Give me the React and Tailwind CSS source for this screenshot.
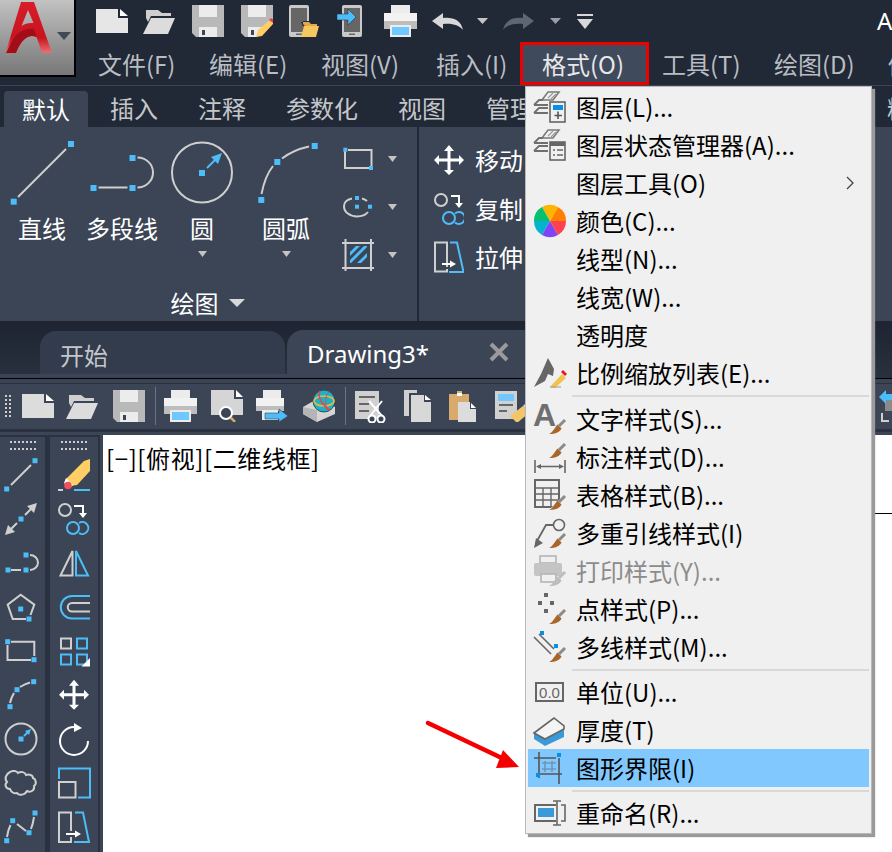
import React from "react";

const GRAY = "#cfcfcf";
const BLUE = "#4dbdf9";
const CJK = "font-['Noto_Sans_CJK_SC','Noto_Sans',sans-serif]";

// page-coordinate svg: the viewBox is the region of the screen it covers
function Pic({ box, className = "", children }) {
  const [x, y, w, h] = box;
  return (
    <svg width={w} height={h} viewBox={`${x} ${y} ${w} ${h}`} className={`shrink-0 block ${className}`} fill="none">
      {children}
    </svg>
  );
}

function Sq({ x, y, s = 6, c = BLUE }) {
  return <rect x={x - s / 2} y={y - s / 2} width={s} height={s} fill={c} />;
}

function Caret({ w = 9, h = 6, c = "#c4c4c4", className = "" }) {
  return (
    <svg width={w} height={h} viewBox={`0 0 ${w} ${h}`} className={`shrink-0 block ${className}`}>
      <polygon points={`0,0 ${w},0 ${w / 2},${h}`} fill={c} />
    </svg>
  );
}

function NewFile({ fill = "#e6e6e6" }) {
  return (
    <svg width="32" height="24" viewBox="0 0 32 24" className="block shrink-0">
      <path d="M0 0H22V9H32V24H0Z" fill={fill} />
      <path d="M24 0L32 7H24Z" fill="#fff" />
    </svg>
  );
}

function OpenFile() {
  return (
    <svg width="32" height="25" viewBox="0 0 32 25" className="block shrink-0">
      <path d="M3 9V1H15L19 4H28V7H8L5 13Z" fill="#cfcfcf" />
      <path d="M8 9H32L25 25H0Z" fill="#dcdcdc" />
    </svg>
  );
}

function Floppy({ pen = false }) {
  return (
    <svg width="32" height="32" viewBox="0 0 32 32" className="block shrink-0">
      <path d="M0 0H32V32H4L0 28Z" fill="#b9b9b9" />
      <rect x="7" y="0" width="18" height="12" fill="#ececec" />
      <rect x="7" y="22" width="18" height="10" fill="#ececec" />
      <rect x="10" y="25" width="3" height="5" fill="#3b4556" />
      {pen && (
        <g>
          <path d="M16 32L32 14V32Z" fill="#212836" />
          <path d="M15 32L17 25L29 15L33 18L21 31Z" fill="#ffcf66" />
          <path d="M28 15L30 13L33 15L32 18Z" fill="#f04050" />
        </g>
      )}
    </svg>
  );
}

function Printer({ paper = true }) {
  return (
    <svg width="33" height="32" viewBox="0 0 33 32" className="block shrink-0">
      <rect x="7" y="0" width="19" height="8" fill="#ececec" />
      <rect x="0" y="8" width="33" height="8" fill="#f2f2f2" />
      <rect x="0" y="16" width="33" height="8" fill="#bdbdbd" />
      <rect x="6" y="20" width="21" height="12" fill="#ececec" />
      {paper && <rect x="8" y="22" width="17" height="8" fill="#6fc8ff" />}
    </svg>
  );
}

function PhoneOpen() {
  return (
    <svg width="30" height="32" viewBox="0 0 30 32" className="block shrink-0">
      <rect x="0" y="0" width="20" height="32" rx="2" fill="#c9c9c9" />
      <rect x="2" y="3" width="16" height="24" fill="#666" />
      <rect x="7" y="28.5" width="6" height="1.5" fill="#666" />
      <path d="M12 17H14V16H20L22 18H28V21H14Z" fill="#212836" />
      <path d="M14 19V17H20L22 19H28V21H16Z" fill="#e0a94f" />
      <path d="M15 21H30L27 32H12Z" fill="#f6c760" />
    </svg>
  );
}

function PhoneSend() {
  return (
    <svg width="25" height="32" viewBox="0 0 25 32" className="block shrink-0">
      <rect x="5" y="0" width="20" height="32" rx="2" fill="#c9c9c9" />
      <rect x="7" y="3" width="16" height="24" fill="#666" />
      <rect x="12" y="28.5" width="6" height="1.5" fill="#666" />
      <path d="M0 9H11V4L19 12L11 20V15H0Z" fill="#4dbdf9" stroke="#212836" strokeWidth="0.5" />
    </svg>
  );
}

function UndoArrow({ c, flip = false }) {
  return (
    <svg width="31" height="17" viewBox="0 0 31 17" className={`block shrink-0 ${flip ? "-scale-x-100" : ""}`}>
      <path d="M0 8L11 0V5C21 4 29 7 31 17C27 12 20 10 11 11V16Z" fill={c} />
    </svg>
  );
}

function CustomizeCaret() {
  return (
    <svg width="16" height="15" viewBox="0 0 16 15" className="block shrink-0">
      <rect x="0" y="0" width="16" height="2" fill="#d8d8d8" />
      <polygon points="0,5 16,5 8,15" fill="#d8d8d8" />
    </svg>
  );
}

function AutocadLogo() {
  return (
    <svg width="58" height="56" viewBox="0 0 58 56" className="block">
      <defs>
        <linearGradient id="logoRed" x1="0" y1="0" x2="0" y2="1">
          <stop offset="0" stopColor="#d81c2a" />
          <stop offset="0.7" stopColor="#c8141f" />
          <stop offset="1" stopColor="#ee7072" />
        </linearGradient>
      </defs>
      <path
        d="M21 2H34L52 53H42L36.5 37C29 34 22 38 16 53H5.5ZM28 10L21.5 26C25 23.5 29 22.5 33.5 23Z"
        fill="url(#logoRed)"
        fillRule="evenodd"
      />
      <path d="M9 47C14 34 24 27 34 29L36.5 37C29 34 22 38 16 53H6Z" fill="#a30d18" />
    </svg>
  );
}

function MenuBar() {
  const items = [
    ["文件(F)", "w-[111px]"],
    ["编辑(E)", "w-[112px]"],
    ["视图(V)", "w-[115px]"],
    ["插入(I)", "w-[84px]"],
  ];
  return (
    <div className="flex h-[43px] items-center pl-[22px] text-[24px] text-[#b9bdc2] whitespace-nowrap">
      {items.map(([t, w]) => (
        <span key={t} className={`${w} shrink-0`}>{t}</span>
      ))}
      <span className="w-[129px] h-[43px] shrink-0 border-[3px] border-[#ee0000] bg-[#3f4a5c] text-[#e8e8e8] flex items-center pl-[19px]">
        格式(O)
      </span>
      <span className="w-[112px] shrink-0 pl-[13px]">工具(T)</span>
      <span className="w-[114px] shrink-0 pl-[13px]">绘图(D)</span>
      <span className="shrink-0 pl-[13px]">修改(M)</span>
    </div>
  );
}

function QuickBar() {
  return (
    <div className="flex h-[42px] items-center pl-[20px]">
      <div className="w-[47px] shrink-0"><NewFile /></div>
      <div className="w-[49px] shrink-0"><OpenFile /></div>
      <div className="w-[49px] shrink-0"><Floppy /></div>
      <div className="w-[48px] shrink-0"><Floppy pen /></div>
      <div className="w-[48px] shrink-0"><PhoneOpen /></div>
      <div className="w-[47px] shrink-0"><PhoneSend /></div>
      <div className="w-[48px] shrink-0"><Printer /></div>
      <div className="w-[45px] shrink-0"><UndoArrow c="#d8d8d8" /></div>
      <div className="w-[26px] shrink-0"><Caret w={11} h={6} /></div>
      <div className="w-[47px] shrink-0"><UndoArrow c="#5d6673" flip /></div>
      <div className="w-[27px] shrink-0"><Caret w={11} h={6} c="#9a9fa6" /></div>
      <CustomizeCaret />
      <span className="ml-[284px] shrink-0 text-[24px] text-white leading-none font-['Noto_Sans',sans-serif]">A</span>
    </div>
  );
}

function Header() {
  return (
    <div className="flex h-[85px]">
      <div className="w-[76px] h-[77px] shrink-0 border-r-2 border-b-2 border-[#000] bg-gradient-to-b from-[#c2c2c2] to-[#787878] relative">
        <AutocadLogo />
        <Caret w={14} h={8} c="#3f4a55" className="absolute left-[57px] top-[32px]" />
      </div>
      <div className="flex-1 min-w-0 overflow-hidden">
        <QuickBar />
        <MenuBar />
      </div>
    </div>
  );
}

function RibbonTabs() {
  const tabs = [
    ["插入", "ml-[22px]"],
    ["注释", "ml-[40px]"],
    ["参数化", "ml-[40px]"],
    ["视图", "ml-[40px]"],
    ["管理", "ml-[40px]"],
  ];
  return (
    <div className="h-[42px] flex text-[24px] text-[#c4c6c9] whitespace-nowrap border-t border-[#3b4556] pl-[4px] overflow-hidden">
      <div className="w-[84px] h-[36px] mt-[5px] shrink-0 bg-[#3b4556] rounded-t-[4px] text-white flex items-center justify-center">
        默认
      </div>
      {tabs.map(([t, m]) => (
        <span key={t} className={`${m} shrink-0 mt-[4px] h-[36px] leading-[36px]`}>{t}</span>
      ))}
      <span className="ml-[353px] shrink-0 mt-[4px] h-[36px] leading-[36px]">精</span>
    </div>
  );
}

function BigTool({ width, label, caret, children }) {
  return (
    <div className={`${width} flex flex-col items-center shrink-0`}>
      <div className="h-[83px]">{children}</div>
      <span className="text-[24px] leading-[36px] text-white">{label}</span>
      {caret && <Caret w={9} h={6} className="mt-[5px]" />}
    </div>
  );
}

function DrawPanel() {
  return (
    <div className="w-[419px] shrink-0 border-r-2 border-[#212836] flex flex-col">
      <div className="flex h-[160px]">
        <BigTool width="w-[84px]" label="直线">
          <Pic box={[-1, 128, 84, 83]}>
            <line x1="65" y1="150" x2="17" y2="198" stroke={GRAY} strokeWidth="2" />
            <Sq x={70} y={145} />
            <Sq x={12.7} y={202.7} />
          </Pic>
        </BigTool>
        <BigTool width="w-[76px]" label="多段线">
          <Pic box={[82.5, 128, 76, 83]}>
            <line x1="97" y1="188.5" x2="126" y2="188.5" stroke={GRAY} strokeWidth="2" />
            <path d="M136 158.5A15.5 15 0 0 1 136 188.5" stroke={GRAY} strokeWidth="2" />
            <Sq x={92} y={189} />
            <Sq x={131} y={189} />
            <Sq x={131} y={159} />
          </Pic>
        </BigTool>
        <BigTool width="w-[84px]" label="圆" caret>
          <Pic box={[157, 128, 84, 83]}>
            <circle cx="199" cy="173.5" r="30" stroke={GRAY} strokeWidth="2" />
            <line x1="204" y1="169" x2="215" y2="158" stroke={BLUE} strokeWidth="2" />
            <polygon points="219,154 215,165 208,158" fill={BLUE} />
            <Sq x={199} y={174} />
          </Pic>
        </BigTool>
        <BigTool width="w-[84px]" label="圆弧" caret>
          <Pic box={[240, 128, 84, 83]}>
            <path d="M257.5 195Q261 177 269 167" stroke={GRAY} strokeWidth="2" />
            <path d="M278 159.5Q289 151 305 147.5" stroke={GRAY} strokeWidth="2" />
            <Sq x={257.3} y={201} />
            <Sq x={273.3} y={163} />
            <Sq x={310.7} y={147} />
          </Pic>
        </BigTool>
        <div className="flex flex-col pt-[8px] pl-[12px]">
          <div className="flex items-center h-[48px]">
            <Pic box={[335, 144, 36, 32]}>
              <path d="M340 151V169H366.5V151H343" stroke={GRAY} strokeWidth="2" />
              <Sq x={340.3} y={150.7} s={4} />
              <Sq x={366} y={169} s={4} />
            </Pic>
            <Caret className="ml-[12px]" />
          </div>
          <div className="flex items-center h-[48px]">
            <Pic box={[335, 192, 36, 32]}>
              <path d="M347 199.5C340 201 339 204 339 207.5C339 213 345 217.5 352 217.5C357 217.5 361 215.5 363 213" stroke={GRAY} strokeWidth="2" />
              <path d="M357 199.5C359 200 361 201 362 202" stroke={GRAY} strokeWidth="2" />
              <Sq x={352} y={199} s={4} />
              <Sq x={352} y={207.7} s={4} />
              <Sq x={365} y={207.7} s={4} />
            </Pic>
            <Caret className="ml-[12px]" />
          </div>
          <div className="flex items-center h-[48px]">
            <Pic box={[335, 240, 36, 32]}>
              <path d="M337 244H369M337 269H369M340.5 240V272M366 240V272" stroke={GRAY} strokeWidth="2" />
              <rect x="345" y="247" width="17" height="17" fill="#3b4556" />
              <path d="M345 253L351 247H355L345 257ZM345 261L359 247H362V248L346 264H345ZM352 264L362 254V258L356 264Z" fill={BLUE} />
            </Pic>
            <Caret className="ml-[12px]" />
          </div>
        </div>
      </div>
      <div className="flex-1 flex items-center justify-center text-white text-[24px] pr-[2px] pt-[2px]">
        <span>绘图</span>
        <Caret w={16} h={8} c="#d8d8d8" className="ml-[10px]" />
      </div>
    </div>
  );
}

function MoveIcon({ c = "#fff" }) {
  return (
    <svg width="30" height="30" viewBox="0 0 30 30" className="block shrink-0">
      <path d="M13.5 5H16.5V13.5H25V10L30 15L25 20V16.5H16.5V25H20L15 30L10 25H13.5V16.5H5V20L0 15L5 10V13.5H13.5V5Z" fill={c} />
      <polygon points="15,0 20,6 10,6" fill={c} />
    </svg>
  );
}

function ModifyPanel() {
  const rows = [
    ["移动", <MoveIcon key="m" />],
    ["复制",
      <Pic key="c" box={[428, 192, 30, 32]}>
        <circle cx="435" cy="199" r="6" stroke={GRAY} strokeWidth="2" />
        <path d="M445 195H453V203" stroke="#fff" strokeWidth="2" />
        <polygon points="449,202 457,202 453,207" fill="#fff" />
        <circle cx="443" cy="217" r="6" stroke={BLUE} strokeWidth="2" />
        <path d="M449 212.5A6 6 0 1 1 449 221.5" stroke={BLUE} strokeWidth="2" />
      </Pic>],
    ["拉伸",
      <Pic key="l" box={[428, 240, 30, 32]}>
        <path d="M441 266V241.5H429V270.5H441V268" stroke={GRAY} strokeWidth="2" />
        <path d="M444 241.5H451L457.5 271H443" stroke={BLUE} strokeWidth="2" />
        <path d="M436 263H445" stroke="#fff" strokeWidth="2" />
        <polygon points="444,259.5 450,263 444,266.5" fill="#fff" />
      </Pic>],
  ];
  return (
    <div className="flex flex-col pt-[9px] pl-[15px]">
      {rows.map(([t, icon]) => (
        <div key={t} className="flex items-center h-[48.5px] gap-[11px] text-white text-[24px] whitespace-nowrap">
          {icon}
          <span>{t}</span>
        </div>
      ))}
    </div>
  );
}

function FileTabs() {
  return (
    <div className="h-[57px] flex flex-col bg-gradient-to-b from-[#1e2431] to-[#29313f]">
      <div className="h-[53px] flex items-end pl-[40px]">
        <div className="w-[245px] h-[43px] bg-[#323c4c] rounded-t-[16px] text-[24px] text-[#c4c6c9] flex items-center pl-[20px] pt-[5px]">
          开始
        </div>
        <div className="w-[252px] ml-[2px] h-[44px] bg-[#3b4556] rounded-t-[16px] flex items-center pl-[20px] pt-[4px] text-white text-[24px] font-['Noto_Sans',sans-serif]">
          Drawing3*
          <svg width="20" height="20" viewBox="0 0 20 20" className="ml-[60px] -mt-[4px] shrink-0 block">
            <path d="M2 2L18 18M18 2L2 18" stroke="#9a9a9a" strokeWidth="4" />
          </svg>
        </div>
      </div>
      <div className="h-[4px] w-[539px] bg-[#3b4556]" />
    </div>
  );
}

function Grip() {
  return (
    <div className="grid grid-cols-2 gap-[2px] w-[6px]">
      {Array.from({ length: 12 }).map((_, i) => (
        <span key={i} className="w-[2px] h-[2px] bg-[#cfcfcf]" />
      ))}
    </div>
  );
}

function StdToolbar() {
  return (
    <div className="h-[50px] bg-[#3b4556] flex flex-col">
      <div className="h-[4px] bg-[#3a4454]" />
      <div className="h-px bg-[#2a3241]" />
      <div className="flex-1 flex items-center pl-[5px] pb-[1px] overflow-hidden">
        <div className="w-[17px] shrink-0"><Grip /></div>
        <div className="w-[44px] shrink-0"><NewFile fill="#dcdcdc" /></div>
        <div className="w-[47px] shrink-0"><OpenFile /></div>
        <div className="w-[42px] shrink-0"><Floppy /></div>
        <span className="w-px h-[38px] shrink-0 bg-[#6b7482] mr-[8px]" />
        <div className="w-[47px] shrink-0"><Printer /></div>
        <div className="w-[45px] shrink-0">
          <svg width="32" height="32" viewBox="0 0 32 32" className="block">
            <path d="M0 0H23V9H32V25H0Z" fill="#d5d5d5" />
            <path d="M25 0L32 7H25Z" fill="#fff" />
            <circle cx="15" cy="23" r="6" fill="#3b4556" stroke="#fff" strokeWidth="2" />
            <path d="M19.5 27.5L24 32" stroke="#d9a86a" strokeWidth="2.5" />
          </svg>
        </div>
        <div className="w-[47px] shrink-0">
          <svg width="32" height="32" viewBox="0 0 32 32" className="block">
            <rect x="7" y="0" width="18" height="8" fill="#ececec" />
            <rect x="0" y="8" width="28" height="8" fill="#f2f2f2" />
            <rect x="0" y="16" width="28" height="5" fill="#bdbdbd" />
            <rect x="6" y="20" width="16" height="10" fill="#ececec" />
            <path d="M9 23H23V19L32 26L23 32V29H9Z" fill="#4dbdf9" stroke="#3b4556" strokeWidth="0.6" />
          </svg>
        </div>
        <div className="w-[42px] shrink-0">
          <svg width="32" height="32" viewBox="0 0 32 32" fill="none" className="block">
            <path d="M0 17L14 9L32 17V24L14 32L0 24Z" fill="#d5d5d5" />
            <path d="M14 32V20L0 17V24Z" fill="#b5b5b5" />
            <circle cx="21" cy="11" r="11" fill="#1cb3c6" stroke="#3b4556" />
            <ellipse cx="21" cy="11" rx="10" ry="5" stroke="#f6b73c" strokeWidth="1.5" />
            <path d="M17 1C14 8 20 16 27 20" stroke="#f04050" strokeWidth="1.5" />
            <path d="M26 2C22 6 22 12 24 20" stroke="#f04050" strokeWidth="1" />
          </svg>
        </div>
        <span className="w-px h-[38px] shrink-0 bg-[#6b7482] mr-[9px]" />
        <div className="w-[49px] shrink-0">
          <svg width="33" height="33" viewBox="0 0 33 33" fill="none" className="block">
            <rect x="0" y="1" width="24" height="28" fill="#d0d0d0" />
            <path d="M4 7H20M4 14H14M4 21H14" stroke="#666" strokeWidth="2" />
            <path d="M14 11L27 26M27 11L15 26" stroke="#fff" strokeWidth="2" />
            <circle cx="17" cy="29" r="3.5" fill="#3b4556" stroke="#fff" strokeWidth="2" />
            <circle cx="26" cy="29" r="3.5" fill="#3b4556" stroke="#fff" strokeWidth="2" />
          </svg>
        </div>
        <div className="w-[45px] shrink-0">
          <svg width="27" height="32" viewBox="0 0 27 32" className="block">
            <path d="M0 0H13V3H5V26H0Z" fill="#d0d0d0" />
            <path d="M7 5H20V12H27V32H7Z" fill="#d8d8d8" />
            <path d="M21 5L27 10H21Z" fill="#fff" />
          </svg>
        </div>
        <div className="w-[46px] shrink-0">
          <svg width="27" height="32" viewBox="0 0 27 32" className="block">
            <path d="M0 4H8V1H13V4H20V12H9V30H0Z" fill="#d9aa6e" />
            <rect x="8" y="3" width="5" height="3" fill="#fff" />
            <path d="M9 12H21V19H27V32H9Z" fill="#dcdcdc" />
            <path d="M22 13L27 18H22Z" fill="#fff" />
          </svg>
        </div>
        <div className="shrink-0">
          <svg width="38" height="32" viewBox="0 0 38 32" fill="none" className="block">
            <rect x="0" y="1" width="22" height="28" fill="#d0d0d0" />
            <rect x="3" y="4" width="16" height="7" fill="#6fc8ff" />
            <path d="M4 15H18M4 21H12" stroke="#666" strokeWidth="2" />
            <path d="M15 26L28 16L34 23L22 33Z" fill="#f2c568" />
            <path d="M28 16L31 13L37 19L34 23Z" fill="#ddd" />
          </svg>
        </div>
        <div className="ml-auto shrink-0">
          <svg width="13" height="34" viewBox="0 0 13 34" fill="none" className="block">
            <rect x="6" y="6" width="7" height="16" fill="#8a8a8a" />
            <path d="M0 8L7 1V15Z" fill="#4dbdf9" />
            <rect x="6" y="5" width="7" height="6" fill="#4dbdf9" />
            <path d="M3 24V32H10" stroke="#cfcfcf" strokeWidth="2" />
          </svg>
        </div>
      </div>
    </div>
  );
}

function Cell({ box, children }) {
  return <Pic box={box}>{children}</Pic>;
}

function GripRow() {
  return (
    <div className="h-[16px] pt-[4px] flex justify-center">
      <div className="grid grid-cols-7 gap-x-[2px] gap-y-[2px]">
        {Array.from({ length: 14 }).map((_, i) => (
          <span key={i} className="w-[2px] h-[2px] bg-[#cfcfcf]" />
        ))}
      </div>
    </div>
  );
}

function DrawColumn() {
  const s = { stroke: GRAY, strokeWidth: 2 };
  return (
    <div className="w-[45px] flex flex-col border-t-2 border-[#2a3241]">
      <GripRow />
      <Cell box={[0, 454, 45, 44]}>
        <line x1="11" y1="486" x2="31" y2="466" {...s} />
        <Sq x={35} y={461.7} s={5} />
        <Sq x={6.7} y={490} s={5} />
      </Cell>
      <Cell box={[0, 498, 45, 44]}>
        <path d="M11 530L17 524M25 516L31 510" {...s} />
        <polygon points="5,536 8,526 15,533" fill={GRAY} />
        <polygon points="37,504 34,514 27,507" fill={GRAY} />
        <Sq x={21} y={520} s={5} />
      </Cell>
      <Cell box={[0, 542, 45, 44]}>
        <path d="M11 571H21" {...s} />
        <path d="M30 556A8 7.5 0 0 1 30 571" {...s} />
        <Sq x={26} y={556} s={5} />
        <Sq x={26} y={571} s={5} />
        <Sq x={8} y={571} s={5} />
      </Cell>
      <Cell box={[0, 586, 45, 44]}>
        <path d="M26 620H12.7L7.7 605.7L20.7 595.7L34.3 605.7L30.5 616" {...s} />
        <Sq x={20.7} y={610} s={5} />
        <Sq x={29} y={620} s={5} />
      </Cell>
      <Cell box={[0, 630, 45, 44]}>
        <path d="M7.5 646V661H31M11 642.7H34.3V657" {...s} />
        <Sq x={7.7} y={642.7} s={5} />
        <Sq x={34} y={660.7} s={5} />
      </Cell>
      <Cell box={[0, 674, 45, 44]}>
        <path d="M10 704Q11 699 14 694" {...s} />
        <path d="M20 688Q25 685 30 683.5" {...s} />
        <Sq x={10} y={707.7} s={5} />
        <Sq x={17} y={690.7} s={5} />
        <Sq x={33.7} y={682.7} s={5} />
      </Cell>
      <Cell box={[0, 718, 45, 44]}>
        <circle cx="21" cy="740" r="15.5" {...s} />
        <line x1="24" y1="737" x2="29" y2="732" stroke={BLUE} strokeWidth="2" />
        <polygon points="31,730 29,736 25,732" fill={BLUE} />
        <Sq x={21} y={740} s={5} />
      </Cell>
      <Cell box={[0, 762, 45, 44]}>
        <path d="M10 773C13 771 17 772 18 774C21 772 25 773 26 776C29 775 33 776 33 779C36 780 37 785 34 787C35 791 31 794 27 792C25 796 19 797 17 794C14 795 11 793 10 790C6 790 4 786 7 783C4 780 6 775 10 773Z" {...s} />
      </Cell>
      <Cell box={[0, 806, 45, 44]}>
        <path d="M7 838Q8 831 10.5 826" {...s} />
        <path d="M17 825L26 832" {...s} />
        <path d="M31 830Q33 825 34 818" {...s} />
        <Sq x={6.7} y={841.7} s={5} />
        <Sq x={12.7} y={821.7} s={5} />
        <Sq x={29} y={833.7} s={5} />
        <Sq x={35} y={814} s={5} />
      </Cell>
    </div>
  );
}

function ModifyColumn() {
  const s = { stroke: GRAY, strokeWidth: 2 };
  const b = { stroke: BLUE, strokeWidth: 2 };
  return (
    <div className="w-[48px] flex flex-col border-t-2 border-[#2a3241]">
      <GripRow />
      <Cell box={[50, 454, 48, 44]}>
        <path d="M66 480L84 462L90 460V472L77 486L70 487Z" fill="#ffcf66" />
        <path d="M66 479L73 486L70 489L64 484Z" fill="#fff" />
        <circle cx="68" cy="486.5" r="3.8" fill="#f0505a" />
        <path d="M58 491H63" {...s} />
        <path d="M74 491H90" {...b} />
      </Cell>
      <Cell box={[50, 498, 48, 44]}>
        <circle cx="65" cy="511" r="6" {...s} />
        <path d="M74 507H83V515" stroke="#fff" strokeWidth="2" />
        <polygon points="79,514 87,514 83,519" fill="#fff" />
        <circle cx="73" cy="529" r="6" {...b} />
        <path d="M79 524A6 6 0 1 1 79 534" {...b} />
      </Cell>
      <Cell box={[50, 542, 48, 44]}>
        <path d="M72.5 552V576.5H60.5Z" {...s} />
        <path d="M76 552V576.5H88Z" {...b} />
      </Cell>
      <Cell box={[50, 586, 48, 44]}>
        <path d="M90 597H72A11.2 11.2 0 0 0 72 619.5H90" {...b} />
        <path d="M90 604H72A4.2 4.2 0 0 0 72 612.5H90" {...s} />
      </Cell>
      <Cell box={[50, 630, 48, 44]}>
        <rect x="61" y="639.5" width="10" height="10" {...s} />
        <rect x="77" y="639.5" width="10" height="10" {...b} />
        <rect x="61" y="655.5" width="10" height="10" {...b} />
        <rect x="77" y="655.5" width="10" height="10" {...b} />
        <polygon points="81.5,667.5 90,667.5 90,659" fill="#fff" />
      </Cell>
      <Cell box={[50, 674, 48, 44]}>
        <g transform="translate(59 680.7)">
          <path d="M13.5 5H16.5V13.5H25V10L30 15L25 20V16.5H16.5V25H20L15 30L10 25H13.5V16.5H5V20L0 15L5 10V13.5H13.5V5Z" fill="#fff" />
          <polygon points="15,0 20,6 10,6" fill="#fff" />
        </g>
      </Cell>
      <Cell box={[50, 718, 48, 44]}>
        <path d="M74 728A14 14 0 1 0 88 742" stroke="#fff" strokeWidth="2" />
        <polygon points="74,724 82,729 74,733" fill="#fff" />
      </Cell>
      <Cell box={[50, 762, 48, 44]}>
        <path d="M59 780V769.5H90V798.5H78" {...b} />
        <rect x="59" y="783" width="16.5" height="15.5" {...s} />
      </Cell>
      <Cell box={[50, 806, 48, 44]}>
        <path d="M71 832V813.5H59V843H71V838" {...s} />
        <path d="M75 813.5H83L89 843H74" {...b} />
        <path d="M66 835H76" stroke="#fff" strokeWidth="2" />
        <polygon points="75,831.5 81,835 75,838.5" fill="#fff" />
      </Cell>
    </div>
  );
}

// little paint brush that the style entries share
function Brush({ y = 0, handle = "#8a8a8a", tip = "#a9662a" }) {
  return (
    <g transform={`translate(0 ${y})`}>
      <path d="M31 17L25 23" stroke={handle} strokeWidth="3" />
      <path d="M23.5 21.5L27.5 25.5C26 29 22 31 15 31C19 29 20.5 25 23.5 21.5Z" fill={tip} />
    </g>
  );
}

function Layers() {
  return (
    <g>
      <path d="M8 9L14 1H25L19 9Z" stroke="#7a7a7a" strokeWidth="1.6" />
      <path d="M14 7L19 2M17 8L22 3" stroke="#9a9a9a" strokeWidth="1.2" />
      <path d="M0 14L5 9H9M0 14H14" stroke="#6f6f6f" strokeWidth="1.8" />
      <path d="M0 22L5 17H14M0 22H14" stroke="#6f6f6f" strokeWidth="1.8" />
    </g>
  );
}

const ICONS = {
  layer: (
    <>
      <Layers />
      <rect x="16" y="11" width="15" height="20" fill="#f0f0f0" stroke="#666" strokeWidth="1.6" />
      <rect x="19" y="14" width="10" height="5" fill="#0a8fe8" />
      <path d="M24 20.5V28M20.5 24.5H28" stroke="#555" strokeWidth="1.6" />
    </>
  ),
  layerState: (
    <>
      <Layers />
      <rect x="16" y="13" width="15" height="18" fill="#f0f0f0" stroke="#666" strokeWidth="1.6" />
      <rect x="16" y="13" width="15" height="4" fill="#666" />
      <path d="M19 21H21M23 21H29M19 26H21M23 26H29" stroke="#666" strokeWidth="1.6" />
    </>
  ),
  color: (
    <>
      <path d="M16 16L24 2.1A16 16 0 0 1 32 16Z" fill="#ff8000" />
      <path d="M16 16L8 2.1A16 16 0 0 1 24 2.1Z" fill="#ffb400" />
      <path d="M16 16L0 16A16 16 0 0 1 8 2.1Z" fill="#06bf6f" />
      <path d="M16 16L8 29.9A16 16 0 0 1 0 16Z" fill="#05b3cf" />
      <path d="M16 16L24 29.9A16 16 0 0 1 8 29.9Z" fill="#7f45f5" />
      <path d="M16 16L32 16A16 16 0 0 1 24 29.9Z" fill="#ff4050" />
    </>
  ),
  scale: (
    <>
      <path d="M14 1L20 12L19 19L14 17L11 24L0 30L7 17Z" fill="#666" />
      <path d="M16 30L28 17L32 21L21 31Z" fill="#f2c14e" />
      <path d="M27 15L29 13L33 17L31 19Z" fill="#e8132a" />
      <path d="M16 30L27 30" stroke="#999" strokeWidth="1" />
    </>
  ),
  text: (
    <>
      <text x="-1" y="23" fontSize="32" fontWeight="700" fill="#6f6f6f" fontFamily="Liberation Sans, sans-serif">A</text>
      <Brush />
    </>
  ),
  dim: (
    <>
      <path d="M1 19V32M31 19V32M4 25.5H28" stroke="#666" strokeWidth="1.6" />
      <polygon points="2,25.5 7,23 7,28" fill="#666" />
      <polygon points="30,25.5 25,23 25,28" fill="#666" />
      <Brush y={-14} />
    </>
  ),
  table: (
    <>
      <rect x="1" y="1" width="24" height="27" stroke="#666" strokeWidth="2" />
      <path d="M1 9H25M1 15H25M1 21H25M9 9V28M17 9V28" stroke="#666" strokeWidth="1.4" />
      <path d="M14 32L32 14V32Z" fill="#f0f0f0" />
      <Brush />
    </>
  ),
  leader: (
    <>
      <circle cx="25" cy="8" r="5.5" stroke="#666" strokeWidth="1.6" />
      <path d="M20 8H12L3 24" stroke="#666" strokeWidth="1.8" />
      <polygon points="0,31 2,21 9,26" fill="#666" />
      <Brush />
    </>
  ),
  plot: (
    <>
      <rect x="6" y="1" width="16" height="7" stroke="#b5b5b5" strokeWidth="1.6" />
      <rect x="0" y="8" width="28" height="13" rx="2" fill="#c4c4c4" />
      <rect x="7" y="19" width="15" height="8" fill="#f0f0f0" stroke="#b5b5b5" strokeWidth="1.6" />
      <Brush handle="#bdbdbd" tip="#bdbdbd" />
    </>
  ),
  point: (
    <>
      <rect x="10" y="0" width="4" height="4" fill="#666" />
      <rect x="4" y="8" width="4" height="4" fill="#666" />
      <rect x="16" y="8" width="4" height="4" fill="#666" />
      <rect x="10" y="16" width="4" height="4" fill="#666" />
      <Brush />
    </>
  ),
  mline: (
    <>
      <path d="M0 6L17 23M5 3L20 18" stroke="#666" strokeWidth="1.6" />
      <rect x="6" y="0" width="4" height="4" fill="#0a8fe8" />
      <rect x="20" y="13" width="4" height="4" fill="#0a8fe8" />
      <Brush />
    </>
  ),
  units: (
    <>
      <rect x="2" y="7" width="27" height="18" stroke="#666" strokeWidth="2" />
      <text x="15.5" y="21.5" textAnchor="middle" fontSize="15" fill="#666" fontFamily="Liberation Sans, sans-serif">0.0</text>
    </>
  ),
  thickness: (
    <>
      <path d="M0 19V25L11 32L30 23V12Z" fill="#3a9ad9" />
      <path d="M0 19L11 25L30 15V12L20 4Z" fill="#f4f4f4" stroke="#666" strokeWidth="1.6" />
    </>
  ),
  limits: (
    <>
      <path d="M0 6H22M5 0V26M25 6V32M5 22H28" stroke="#555" strokeWidth="1.6" />
      <path d="M8 11H22M8 17H22M11 9V20M18 9V20" stroke="#6f96bd" strokeWidth="1.6" />
      <rect x="23" y="1" width="4" height="4" fill="#0a8fe8" />
      <rect x="2" y="21" width="4" height="4" fill="#0a8fe8" />
    </>
  ),
  rename: (
    <>
      <path d="M22 8H1V24H22" stroke="#666" strokeWidth="2" />
      <rect x="4" y="11" width="16" height="9" fill="#3a9ad9" />
      <path d="M19 4H27M19 28H27M23 4V28M27 8H31V24H27" stroke="#666" strokeWidth="1.6" />
    </>
  ),
};

function MenuRow({ icon, label, active, muted, chevron, short }) {
  return (
    <div className={`flex items-center ${short ? "h-[36px]" : "h-[38px]"} ${active ? "bg-[#80c8fd]" : ""}`}>
      <div className="w-[44px] h-full shrink-0 flex items-center justify-center">
        {icon && (
          <svg width="32" height="32" viewBox="0 0 32 32" fill="none" className="block overflow-visible">
            {ICONS[icon]}
          </svg>
        )}
      </div>
      <span className={`pl-[4px] ${muted ? "text-[#8c8c8c]" : "text-[#000]"}`}>{label}</span>
      {chevron && (
        <svg width="8" height="14" viewBox="0 0 8 14" className="ml-auto mr-[15px] block">
          <path d="M1 1L7 7L1 13" stroke="#444" strokeWidth="1.3" fill="none" />
        </svg>
      )}
    </div>
  );
}

function MenuSep({ h }) {
  return (
    <div className={`${h} flex items-center pl-[44px]`}>
      <div className="h-[2px] w-full bg-[#d8d8d8]" />
    </div>
  );
}

function FormatMenu() {
  return (
    <div className="absolute left-[525px] top-[86px] w-[347px] h-[748px] border border-[#b8b8b8] bg-[#f0f0f0] shadow-[3px_3px_1px_#9a9a9a] pt-[1px] px-[2px] text-[24px] whitespace-nowrap">
      <MenuRow icon="layer" label="图层(L)..." />
      <MenuRow icon="layerState" label="图层状态管理器(A)..." />
      <MenuRow label="图层工具(O)" chevron />
      <MenuRow icon="color" label="颜色(C)..." />
      <MenuRow label="线型(N)..." />
      <MenuRow label="线宽(W)..." />
      <MenuRow label="透明度" />
      <MenuRow icon="scale" label="比例缩放列表(E)..." />
      <MenuSep h="h-[8px]" />
      <MenuRow icon="text" label="文字样式(S)..." />
      <MenuRow icon="dim" label="标注样式(D)..." />
      <MenuRow icon="table" label="表格样式(B)..." />
      <MenuRow icon="leader" label="多重引线样式(I)" />
      <MenuRow icon="plot" label="打印样式(Y)..." muted />
      <MenuRow icon="point" label="点样式(P)..." />
      <MenuRow icon="mline" label="多线样式(M)..." />
      <MenuSep h="h-[7px]" />
      <MenuRow icon="units" label="单位(U)..." />
      <MenuRow icon="thickness" label="厚度(T)" />
      <MenuRow icon="limits" label="图形界限(I)" active />
      <MenuSep h="h-[8px]" />
      <MenuRow icon="rename" label="重命名(R)..." short />
    </div>
  );
}

export default function App() {
  return (
    <div className={`relative w-[892px] h-[852px] overflow-hidden bg-[#212836] flex flex-col ${CJK}`}>
      <Header />
      <RibbonTabs />
      <div className="h-[194px] bg-[#3b4556] flex overflow-hidden">
        <DrawPanel />
        <ModifyPanel />
      </div>
      <FileTabs />
      <div className="h-px bg-black" />
      <StdToolbar />
      <div className="h-[3px] bg-[#2a3241]" />
      <div className="h-[3px] bg-[#3b4556]" />
      <div className="flex-1 min-h-0 flex">
        <div className="w-[103px] shrink-0 bg-[#3b4556] flex">
          <DrawColumn />
          <div className="w-[5px] bg-[#2a3241]" />
          <ModifyColumn />
          <div className="w-[2px] bg-[#2a3241]" />
        </div>
        <div className="flex-1 bg-white relative pl-[3px] pt-[5px] text-[24px] leading-[36px] tracking-[0.6px] text-black whitespace-nowrap">
          [−][俯视][二维线框]
          <div className="absolute left-[770px] top-[78px] w-[20px] h-px bg-black" />
        </div>
      </div>
      <FormatMenu />
      <svg width="110" height="60" viewBox="420 715 110 60" className="absolute left-[420px] top-[715px]">
        <line x1="428" y1="723" x2="506" y2="760" stroke="#f40000" strokeWidth="4.5" strokeLinecap="round" />
        <polygon points="503,750 519,767 496,768" fill="#f40000" />
      </svg>
    </div>
  );
}
